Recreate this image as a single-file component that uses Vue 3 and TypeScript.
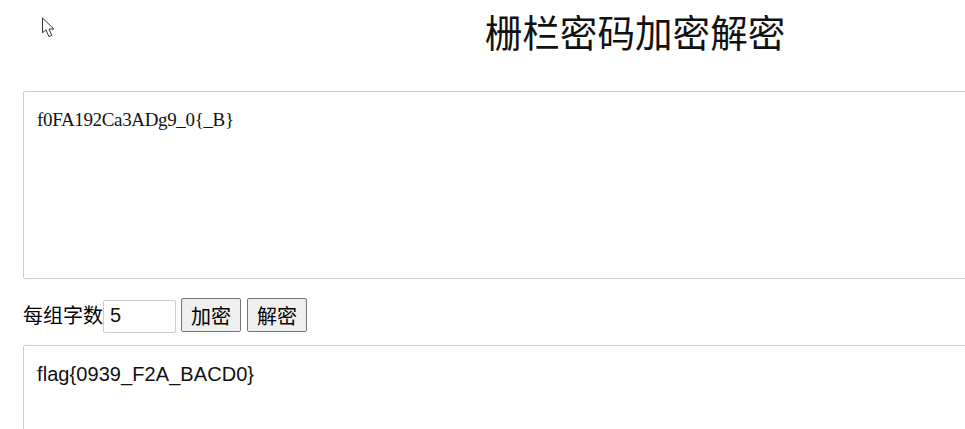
<script setup lang="ts">
import { ref } from 'vue'
const cipher = ref('f0FA192Ca3ADg9_0{_B}')
const size = ref('5')
const plain = ref('flag{0939_F2A_BACD0}')
</script>

<template>
  <div class="viewport">
    <svg class="cursor" width="14" height="21" viewBox="0 0 14 21">
      <path d="M1.5 1V15.8L5 12.8L7.9 19.6L10.8 18.4L8 12H12.8Z" fill="#fff" stroke="#333" stroke-width="1" stroke-linejoin="miter" />
    </svg>
    <main class="page">
      <h1 class="title">栅栏密码加密解密</h1>
      <textarea v-model="cipher" class="box box-cipher" spellcheck="false"></textarea>
      <div class="controls">
        <label class="label" for="size">每组字数</label>
        <input id="size" v-model="size" class="size" type="text" />
        <button class="btn" type="button">加密</button>
        <button class="btn btn-next" type="button">解密</button>
      </div>
      <textarea v-model="plain" class="box box-plain" spellcheck="false"></textarea>
    </main>
  </div>
</template>

<style scoped>
.viewport {
  position: relative;
  width: 965px;
  height: 429px;
  overflow: hidden;
  background: #fff;
}
.cursor {
  position: absolute;
  left: 41px;
  top: 17px;
}
.page {
  width: 1270px;
  box-sizing: border-box;
  padding: 0 23px;
  font-family: "Liberation Sans", "Noto Sans CJK SC", sans-serif;
  color: #000;
}
.title {
  margin: 0;
  height: 91px;
  padding-top: 8px;
  box-sizing: border-box;
  text-align: center;
  font-size: 37.6px;
  line-height: 52px;
  font-weight: 400;
  color: #111;
}
.box {
  display: block;
  width: 100%;
  box-sizing: border-box;
  margin: 0;
  padding: 14px 13px;
  border: 1px solid #ccc;
  border-radius: 2px 0 0 2px;
  outline: none;
  resize: none;
  background: #fff;
  color: #111;
}
.box-cipher {
  height: 188px;
  font-family: "Liberation Serif", serif;
  font-size: 19px;
  letter-spacing: -0.35px;
  line-height: 26px;
  padding-top: 15px;
}
.box-plain {
  height: 188px;
  padding-top: 15px;
  font-family: "Liberation Sans", sans-serif;
  font-size: 20px;
  letter-spacing: 0.07px;
  line-height: 26px;
}
.controls {
  display: flex;
  align-items: center;
  height: 66px;
  padding-top: 6px;
  box-sizing: border-box;
  font-size: 20px;
}
.label {
  font-size: 20px;
  line-height: 26px;
  margin-top: 2px;
}
.size {
  width: 73px;
  height: 33px;
  margin-top: 3px;
  box-sizing: border-box;
  padding: 0 6px 2px;
  border: 1px solid #ccc;
  border-radius: 2px;
  outline: none;
  font-family: inherit;
  font-size: 20px;
  color: #111;
}
.btn {
  height: 34px;
  width: 60px;
  margin-left: 5px;
  padding: 0;
  border: 1px solid #767676;
  border-radius: 2px;
  background: #efefef;
  font-family: inherit;
  font-size: 20px;
  color: #000;
}
.btn-next {
  margin-left: 6px;
}
</style>
